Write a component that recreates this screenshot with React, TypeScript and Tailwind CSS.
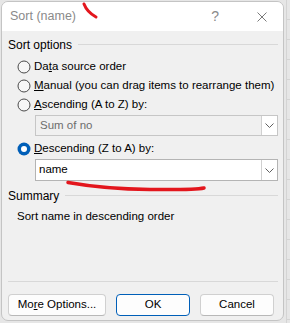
import React from "react";

const font = { fontFamily: '"Liberation Sans", Arial, sans-serif' };

function Radio({ checked, children }: { checked?: boolean; children: React.ReactNode }) {
  return (
    <div className="flex h-[19px] items-center pl-[9px]">
      <svg width="14" height="14" viewBox="0 0 14 14" className="mr-[3px] shrink-0">
        {checked ? (
          <>
            <circle cx="7" cy="7" r="6.5" fill="#005fb8" />
            <circle cx="7" cy="7" r="3" fill="#ffffff" />
          </>
        ) : (
          <circle cx="7" cy="7" r="6" fill="#f7f7f7" stroke="#4a4a4a" strokeWidth="1" />
        )}
      </svg>
      <span className="whitespace-nowrap text-[11.5px] text-black">{children}</span>
    </div>
  );
}

function Select({ value, disabled }: { value: string; disabled?: boolean }) {
  return (
    <div
      className={
        disabled
          ? "ml-[27px] mr-[5px] flex h-[21px] border border-[#c6c6c6] bg-[#f0f0f0]"
          : "ml-[27px] mr-[5px] flex h-[22px] border border-[#b4b4b4] bg-white"
      }
    >
      <div
        className={
          disabled
            ? "flex flex-1 items-center pl-[4px] text-[11.5px] text-[#6d6d6d]"
            : "flex flex-1 items-center pl-[3px] text-[11.5px] text-black"
        }
      >
        {value}
      </div>
      <div className="flex w-[16px] items-center justify-center border-l border-[#d0d0d0] bg-white">
        <svg width="9" height="5" viewBox="0 0 9 5">
          <path d="M0.5 0.5 L4.5 4.5 L8.5 0.5" fill="none" stroke="#606060" strokeWidth="1" />
        </svg>
      </div>
    </div>
  );
}

function GroupLabel({ children }: { children: React.ReactNode }) {
  return (
    <div className="flex h-[15px] items-center pr-[5px] text-[12px] text-black">
      <span className="whitespace-nowrap">{children}</span>
      <div className="ml-[6px] h-px flex-1 bg-[#d8d8d8]" />
    </div>
  );
}

function Btn({ children, primary }: { children: React.ReactNode; primary?: boolean }) {
  return (
    <button
      className={
        primary
          ? "flex h-[22px] items-center justify-center rounded-[4px] border border-[#005fb8] bg-[#fdfdfd] text-[11.5px] text-black"
          : "flex h-[22px] items-center justify-center rounded-[4px] border border-[#d0d0d0] border-b-[#b8b8b8] bg-[#fdfdfd] text-[11.5px] text-black"
      }
    >
      {children}
    </button>
  );
}

export default function App() {
  return (
    <div className="relative flex h-[323px] w-[290px] overflow-hidden bg-[#e6e6e6]" style={font}>
      <div className="ml-[1px] mt-[1px] flex h-[320px] w-[283px] flex-col overflow-hidden rounded-[7px] border border-[#c4c4c4] bg-[#f0f0f0]">
        <div className="flex h-[29px] items-center bg-white pl-[8px] pr-[16px] text-[12.5px] text-[#8a8a8a]">
          <span className="flex-1">Sort (name)</span>
          <span className="mr-[38px] text-[14px] text-[#8a8a8a]">?</span>
          <svg width="10" height="10" viewBox="0 0 10 10">
            <path d="M0.5 0.5 L9.5 9.5 M9.5 0.5 L0.5 9.5" stroke="#7a7a7a" strokeWidth="1" />
          </svg>
        </div>

        <div className="flex flex-1 flex-col pl-[6px]">
          <div className="mt-[6px]">
            <GroupLabel>Sort options</GroupLabel>
          </div>
          <div className="mt-[5px]">
            <Radio>
              Da<u>t</u>a source order
            </Radio>
            <Radio>
              <u>M</u>anual (you can drag items to rearrange them)
            </Radio>
            <Radio>
              <u>A</u>scending (A to Z) by:
            </Radio>
          </div>
          <div className="mt-[1px]">
            <Select value="Sum of no" disabled />
          </div>
          <div className="mt-[3px]">
            <Radio checked>
              <u>D</u>escending (Z to A) by:
            </Radio>
          </div>
          <div className="mt-[1px]">
            <Select value="name" />
          </div>
          <div className="mt-[7px]">
            <GroupLabel>Summary</GroupLabel>
          </div>
          <div className="mt-[5px] pl-[9px] text-[11.5px] text-black">Sort name in descending order</div>
          <div className="flex-1" />
          <div className="mr-[5px] h-px bg-[#d8d8d8]" />
          <div className="mt-[12px] mb-[4px] flex gap-[10px] pr-[9px]">
            <div className="flex w-[98px] flex-col">
              <Btn>
                Mo<u>r</u>e Options...
              </Btn>
            </div>
            <div className="flex w-[74px] flex-col">
              <Btn primary>OK</Btn>
            </div>
            <div className="flex w-[74px] flex-col">
              <Btn>Cancel</Btn>
            </div>
          </div>
        </div>
      </div>

      <div className="ml-[2px] flex flex-1 flex-col border-l border-[#d4d4d4]">
        {Array.from({ length: 17 }).map((_, i) => (
          <div key={i} className="h-[20px] shrink-0 border-b border-[#d4d4d4]" />
        ))}
      </div>

      <svg className="pointer-events-none absolute left-0 top-0" width="290" height="323" viewBox="0 0 290 323">
        <path d="M84 4 Q87 12 96 17" fill="none" stroke="#e3161d" strokeWidth="3" strokeLinecap="round" />
        <path d="M68 182.5 Q105 189 150 189.5 T204 188" fill="none" stroke="#e3161d" strokeWidth="3.5" strokeLinecap="round" />
      </svg>
    </div>
  );
}
